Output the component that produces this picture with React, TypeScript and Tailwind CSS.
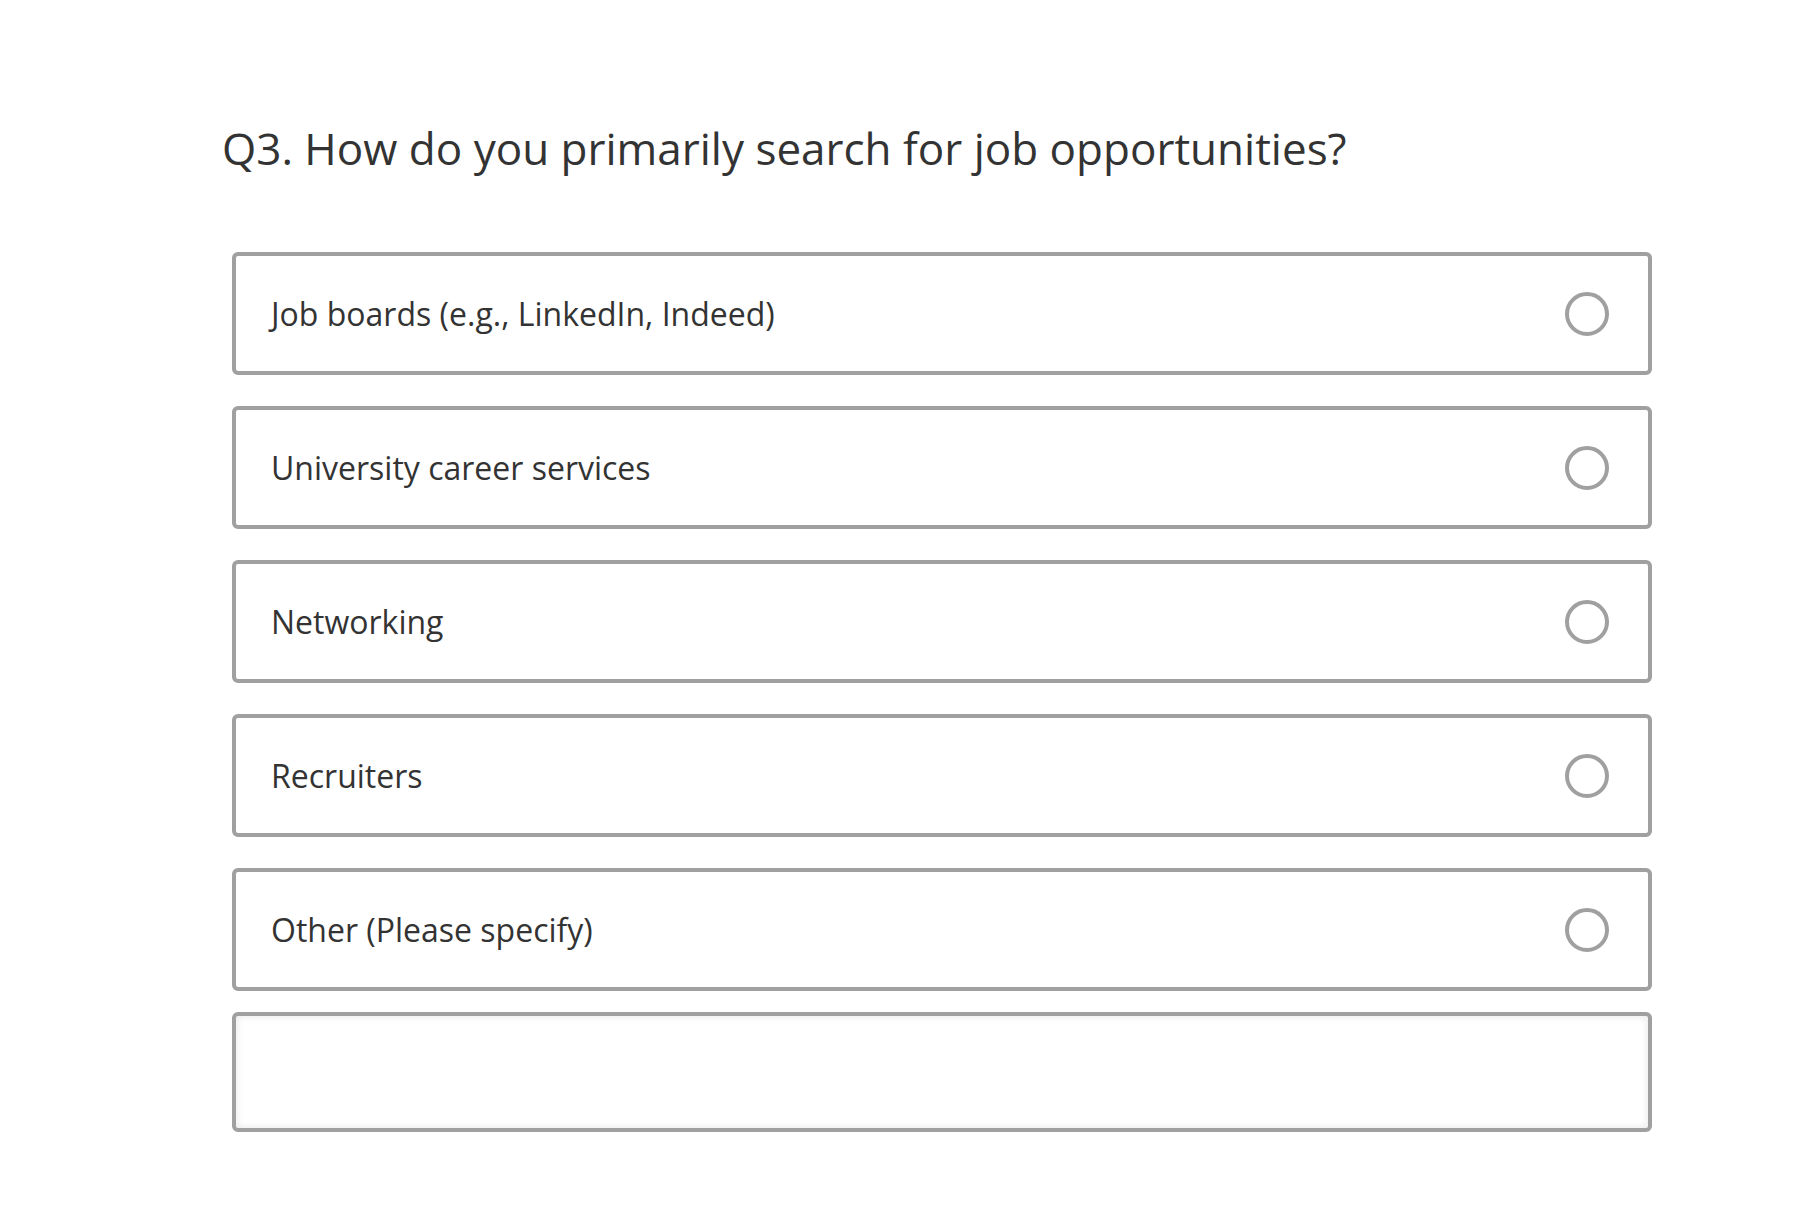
import React, { useState } from 'react';

const OPTIONS = [
  'Job boards (e.g., LinkedIn, Indeed)',
  'University career services',
  'Networking',
  'Recruiters',
  'Other (Please specify)',
];

const App: React.FC = () => {
  const [selected, setSelected] = useState<number | null>(null);
  const [other, setOther] = useState('');

  return (
    <div
      className="min-h-screen bg-white pl-[222px] pt-[122px] text-[#333333]"
      style={{ fontFamily: '"Open Sans", "Noto Sans", sans-serif' }}
    >
      {/* Question */}
      <h1 className="text-[44px] leading-[52px] font-normal">
        Q3. How do you primarily search for job opportunities?
      </h1>

      {/* Answer list */}
      <div className="ml-[10px] mt-[78px] flex w-[1420px] flex-col gap-[31px]">
        {OPTIONS.map((label, i) => (
          <button
            key={label}
            onClick={() => setSelected(i)}
            className="flex h-[123px] items-center justify-between rounded-[6px] border-[4px] border-[#a0a0a0] bg-white pl-[35px] pr-[39px] text-left"
          >
            <span className="text-[32px] leading-[40px]">{label}</span>
            <span className="flex h-[44px] w-[44px] items-center justify-center rounded-full border-[4px] border-[#a0a0a0]">
              {selected === i && <span className="h-[22px] w-[22px] rounded-full bg-[#a0a0a0]" />}
            </span>
          </button>
        ))}
      </div>

      {/* Other text field */}
      <textarea
        value={other}
        onChange={e => setOther(e.target.value)}
        className="ml-[10px] mt-[21px] block h-[120px] w-[1420px] resize-none rounded-[6px] border-[4px] border-[#a0a0a0] bg-white px-[20px] py-[16px] text-[28px] shadow-[inset_0_0_6px_2px_rgba(0,0,0,0.07)] outline-none"
      />
    </div>
  );
};

export default App;
